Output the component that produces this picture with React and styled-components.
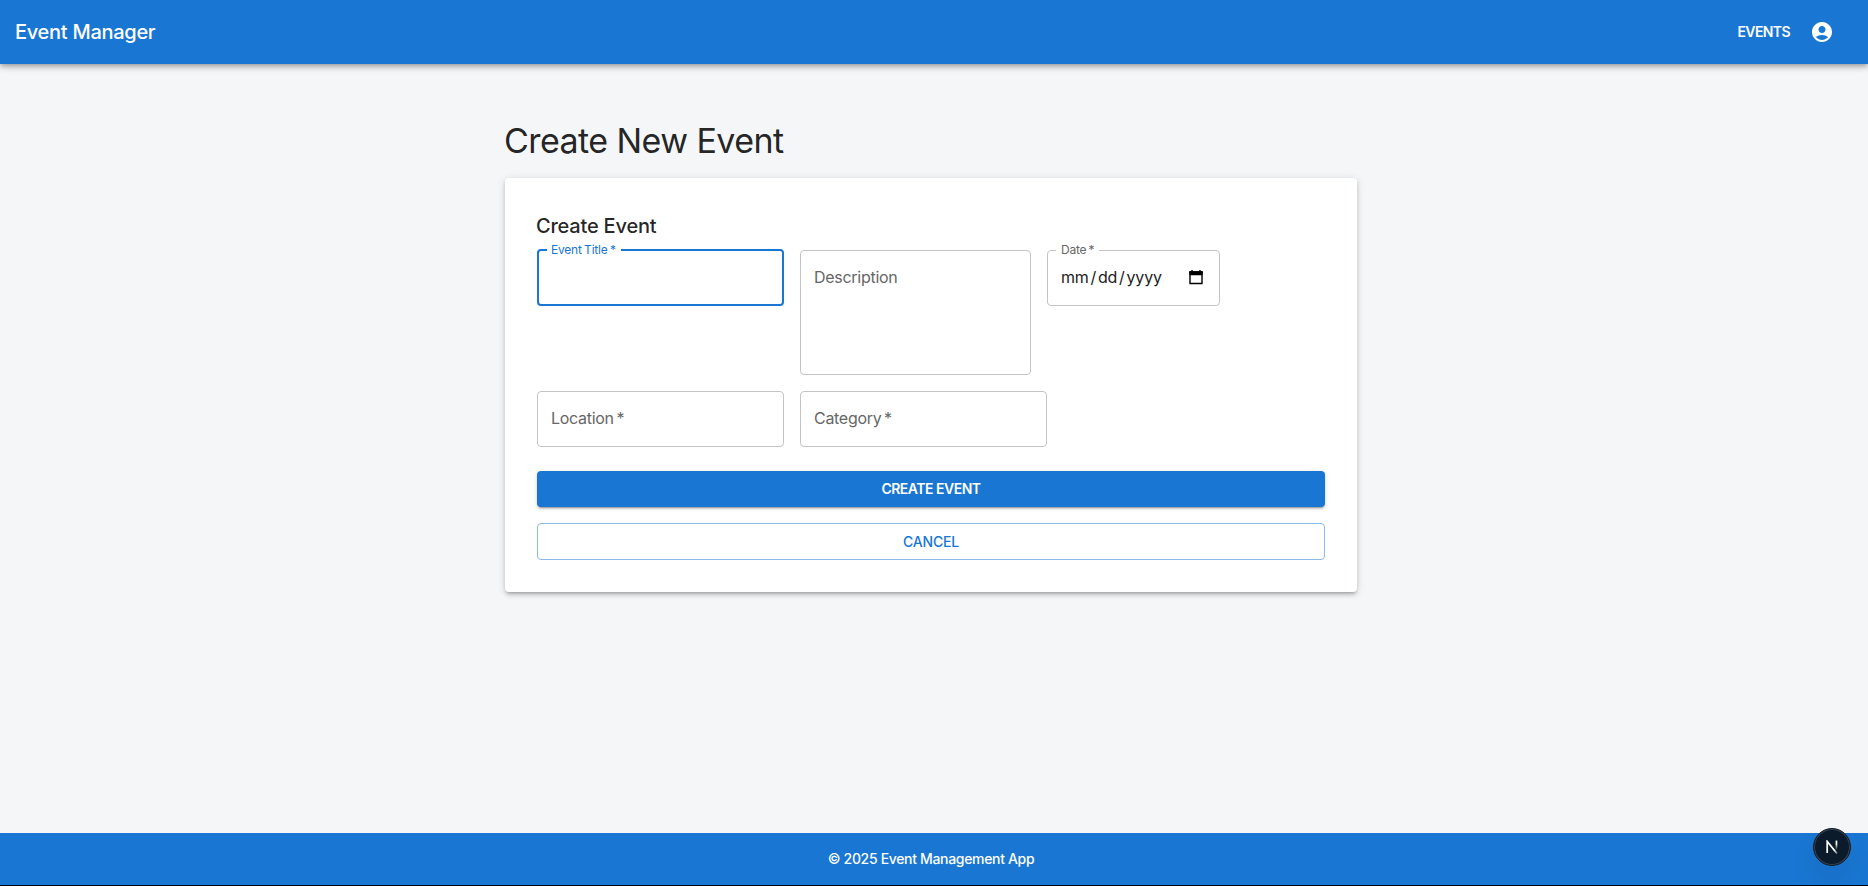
import React from "react";
import styled, { createGlobalStyle } from "styled-components";

const Global = createGlobalStyle`
  *, *::before, *::after { box-sizing: border-box; }
  html, body { margin: 0; padding: 0; height: 100%; overflow: hidden; }
  body { background: #f4f6f8; font-family: Inter, "Open Sans", sans-serif; color: rgba(0,0,0,.87); }
`;

const Page = styled.div`
  display: flex;
  flex-direction: column;
  height: 886px;
  border-bottom: 1px solid #050510;
`;

const Header = styled.header`
  display: flex;
  align-items: center;
  justify-content: space-between;
  flex: none;
  height: 64px;
  padding: 0 34px 0 15px;
  color: #fff;
  background: #1976d2;
  box-shadow: 0 2px 4px -1px rgba(0,0,0,.2), 0 4px 5px 0 rgba(0,0,0,.14), 0 1px 10px 0 rgba(0,0,0,.12);
`;

const Text = styled.span`
  display: block;
  white-space: nowrap;
  width: max-content;
  padding-bottom: ${(p) => p.$lift || 0}px;
  font-size: ${(p) => p.$size}px;
  font-weight: ${(p) => p.$weight || 400};
  letter-spacing: ${(p) => p.$track || 0}px;
  word-spacing: ${(p) => p.$word || 0}px;
  line-height: ${(p) => p.$line || 1.5};
`;

const Nav = styled.nav`
  display: flex;
  align-items: center;
  gap: 20px;
`;

const AccountIcon = styled.svg`
  display: block;
  width: 24px;
  height: 24px;
  fill: currentColor;
`;

const Main = styled.main`
  display: flex;
  justify-content: center;
  flex: 1;
  padding: 56px 6px 0 0;
`;

const Container = styled.div`
  width: 852px;
`;

const Title = styled.h1`
  margin: 0 0 16px -1px;
  font-weight: 400;
  height: 42px;
`;

const Card = styled.section`
  height: 414px;
  padding: 32px;
  border-radius: 4px;
  background: #fff;
  box-shadow: 0 3px 3px -2px rgba(0,0,0,.2), 0 3px 4px 0 rgba(0,0,0,.14), 0 1px 8px 0 rgba(0,0,0,.12);
`;

const CardTitle = styled.h2`
  margin: 0 0 8px -1px;
  font-weight: 500;
  height: 32px;
`;

const Row = styled.div`
  display: flex;
  align-items: flex-start;
  gap: 16px;
  margin-bottom: 16px;
`;

const Field = styled.div`
  position: relative;
  flex: none;
  width: ${(p) => p.$w}px;
  height: ${(p) => p.$h || 56}px;
  padding: 0 13px;
  border: 1px solid #c4c4c4;
  border-radius: 4px;
  color: #666;
  ${(p) => p.$focus && "height: 57px; margin-top: -1px; border: 2px solid #1976d2; color: #1976d2;"}
`;

const FieldLabel = styled.span`
  position: absolute;
  top: -10px;
  left: 8px;
  padding: 0 5px 0 ${(p) => p.$pad}px;
  background: #fff;
`;

const FieldBody = styled.div`
  display: flex;
  align-items: center;
  justify-content: space-between;
  height: 54px;
`;

const DateText = styled.div`
  color: #1c1c1c;
`;

const Slash = styled.span`
  padding: 0 1.8px;
`;

const CalendarIcon = styled.svg`
  width: 14px;
  height: 15px;
  margin: 0 3px 1px 0;
  fill: none;
  stroke: #000;
  stroke-width: 1.4;
`;

const Actions = styled.div`
  display: flex;
  flex-direction: column;
  gap: 16px;
  margin-top: 24px;
`;

const Button = styled.button`
  display: flex;
  align-items: center;
  justify-content: center;
  width: 100%;
  height: ${(p) => (p.$outlined ? 37 : 36)}px;
  padding: 0;
  border-radius: 4px;
  font-family: inherit;
  color: ${(p) => (p.$outlined ? "#1976d2" : "#fff")};
  background: ${(p) => (p.$outlined ? "#fff" : "#1976d2")};
  border: ${(p) => (p.$outlined ? "1px solid #8cbae8" : "0")};
  box-shadow: ${(p) => (p.$outlined ? "none" : "0 3px 1px -2px rgba(0,0,0,.2), 0 2px 2px 0 rgba(0,0,0,.14), 0 1px 5px 0 rgba(0,0,0,.12)")};
`;

const Footer = styled.footer`
  display: flex;
  flex: none;
  align-items: center;
  justify-content: center;
  height: 52px;
  padding-right: 6px;
  color: #fff;
  background: #1976d2;
`;

const DevBadge = styled.div`
  position: fixed;
  right: 17px;
  bottom: 20px;
  width: 38px;
  height: 38px;
  border-radius: 50%;
  background: #0b1b2b;
  border: 1px solid #15202b;
  box-shadow: inset 0 0 0 1px #38444f, 0 16px 32px -8px rgba(0,0,0,.2);
  display: flex;
  align-items: center;
  justify-content: center;
`;

const NextMark = styled.svg`
  width: 12px;
  height: 14px;
  fill: none;
  stroke-width: 1.7;
`;

export default function App() {
  return (
    <Page>
      <Global />
      <Header>
        <Text $size={20} $weight={500} $track={-0.28}>Event Manager</Text>
        <Nav>
          <Text $size={14} $weight={600} $track={-0.6} $lift={1}>EVENTS</Text>
          <AccountIcon viewBox="0 0 24 24">
            <path d="M12 2C6.48 2 2 6.48 2 12s4.48 10 10 10 10-4.48 10-10S17.52 2 12 2m0 4c1.93 0 3.5 1.57 3.5 3.5S13.93 13 12 13s-3.5-1.57-3.5-3.5S10.07 6 12 6m0 14c-2.03 0-4.43-.82-6.14-2.88C7.55 15.8 9.68 15 12 15s4.45.8 6.14 2.12C16.43 19.18 14.03 20 12 20" />
          </AccountIcon>
        </Nav>
      </Header>
      <Main>
        <Container>
          <Title><Text $size={34} $track={-0.57} $line={1.235}>Create New Event</Text></Title>
          <Card>
            <CardTitle><Text $size={20} $weight={500} $track={-0.2} $line={1.6}>Create Event</Text></CardTitle>
            <Row>
              <Field $w={247} $focus>
                <FieldLabel $pad={4}><Text $size={12} $track={-0.2} $word={-0.8}>Event Title *</Text></FieldLabel>
              </Field>
              <Field $w={231} $h={125}>
                <FieldBody><Text $size={16} $track={-0.28} $lift={2}>Description</Text></FieldBody>
              </Field>
              <Field $w={173}>
                <FieldLabel $pad={5}><Text $size={12} $track={-0.2} $word={-1}>Date *</Text></FieldLabel>
                <FieldBody>
                  <DateText>
                    <Text $size={16} $track={-0.15} $lift={2}>mm<Slash>/</Slash>dd<Slash>/</Slash>yyyy</Text>
                  </DateText>
                  <CalendarIcon viewBox="0 0 14 15">
                    <path d="M3 0v2M11 0v2M1 2h12v11.5H1z" />
                    <path d="M1 2h12v2.5H1z" fill="#000" />
                  </CalendarIcon>
                </FieldBody>
              </Field>
            </Row>
            <Row>
              <Field $w={247}>
                <FieldBody><Text $size={16} $track={-0.3} $word={-1.5} $lift={2}>Location *</Text></FieldBody>
              </Field>
              <Field $w={247}>
                <FieldBody><Text $size={16} $track={-0.3} $word={-1.5} $lift={2}>Category *</Text></FieldBody>
              </Field>
            </Row>
            <Actions>
              <Button><Text $size={14} $weight={600} $track={-0.5} $lift={2}>CREATE EVENT</Text></Button>
              <Button $outlined><Text $size={14} $weight={500} $track={-0.15} $lift={1}>CANCEL</Text></Button>
            </Actions>
          </Card>
        </Container>
      </Main>
      <Footer><Text $size={14} $weight={500} $track={-0.33} $lift={2}>© 2025 Event Management App</Text></Footer>
      <DevBadge>
        <NextMark viewBox="0 0 12 14">
          <defs>
            <linearGradient id="stem" x1="0" y1="1" x2="0" y2="10" gradientUnits="userSpaceOnUse">
              <stop offset="0.3" stopColor="#fff" />
              <stop offset="1" stopColor="#fff" stopOpacity="0" />
            </linearGradient>
            <linearGradient id="diagonal" x1="5" y1="6" x2="11.5" y2="14" gradientUnits="userSpaceOnUse">
              <stop offset="0.5" stopColor="#fff" />
              <stop offset="1" stopColor="#fff" stopOpacity="0.3" />
            </linearGradient>
          </defs>
          <path d="M1.2 13V1.4L11 13.6" stroke="url(#diagonal)" />
          <rect x="9.6" y="0.6" width="1.7" height="9" fill="url(#stem)" />
        </NextMark>
      </DevBadge>
    </Page>
  );
}
